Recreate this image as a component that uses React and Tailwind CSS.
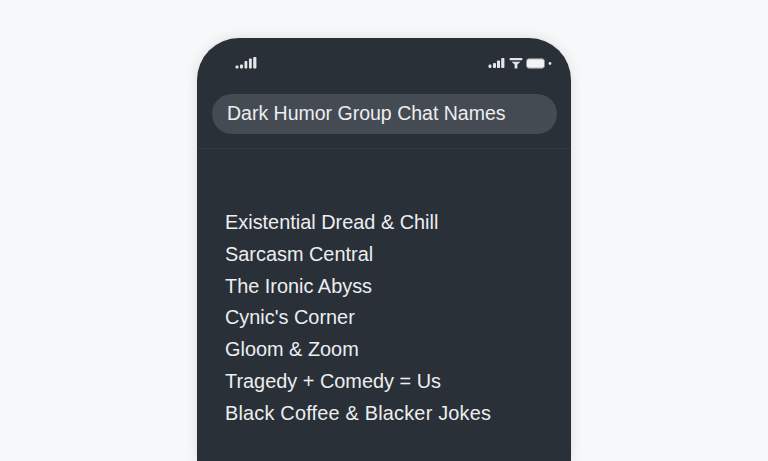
const NAMES = [
  'Existential Dread & Chill',
  'Sarcasm Central',
  'The Ironic Abyss',
  "Cynic's Corner",
  'Gloom & Zoom',
  'Tragedy + Comedy = Us',
  'Black Coffee & Blacker Jokes',
];

function SignalBars() {
  return (
    <svg width="23" height="14" viewBox="0 0 23 14" fill="#e3e5e7">
      <rect x="0.5" y="9.5" width="3" height="3" rx="1.2" />
      <rect x="5" y="8.5" width="3" height="4" rx="1" />
      <rect x="9.5" y="5" width="2.8" height="7.5" rx="0.8" />
      <rect x="14" y="2.5" width="2.8" height="10" rx="0.8" />
      <rect x="18.2" y="1" width="3.2" height="11.5" rx="0.8" />
    </svg>
  );
}

function StatusIcons() {
  return (
    <div className="mt-[1px] flex items-center">
      <svg width="17" height="14" viewBox="0 0 17 14" fill="#e3e5e7">
        <rect x="0.5" y="7.5" width="3" height="3.5" rx="1.2" />
        <rect x="5" y="6" width="3" height="5" rx="1" />
        <rect x="9" y="3.5" width="3" height="7.5" rx="0.8" />
        <rect x="13.2" y="1" width="3.2" height="10" rx="0.8" />
      </svg>
      <svg className="ml-[4px]" width="14" height="14" viewBox="0 0 14 14" fill="#e3e5e7">
        <rect x="0.5" y="1" width="13" height="2.2" rx="1" />
        <path d="M2.5 4.8h9L8.4 7.6v3.9H5.6V7.6z" />
      </svg>
      <svg className="ml-[3px]" width="27" height="14" viewBox="0 0 27 14" fill="none">
        <rect x="0.5" y="1.8" width="18" height="9.4" rx="2.4" fill="#f2f3f4" stroke="#8a8f94" strokeWidth="1" />
        <circle cx="24" cy="6.5" r="1.4" fill="#e3e5e7" />
      </svg>
    </div>
  );
}

export default function App() {
  return (
    <div className="h-[461px] overflow-hidden bg-[#f6f8fa] pt-[38px] font-['Liberation_Sans',sans-serif]">
      <div className="ml-[197px] h-[423px] w-[374px] overflow-hidden rounded-t-[42px] bg-[#2a3037] shadow-[0_0_12px_rgba(40,50,60,0.12)]">
        {/* Status bar */}
        <div className="flex h-[56px] items-start justify-between pl-[38px] pr-[18px] pt-[18px]">
          <SignalBars />
          <StatusIcons />
        </div>

        {/* Search title */}
        <div className="border-b border-[#343a41] px-[15px] pb-[14px]">
          <div className="flex h-[40px] w-[345px] items-center rounded-full bg-[#444b52] pb-[1px] pl-[15px]">
            <span className="text-[19.5px] text-[#eceef0]">Dark Humor Group Chat Names</span>
          </div>
        </div>

        {/* List */}
        <ul className="pl-[28px] pt-[58px]">
          {NAMES.map((name) => (
            <li key={name} className="text-[19.9px] leading-[31.8px] text-[#eceef0] last:tracking-[0.2px]">
              {name}
            </li>
          ))}
        </ul>
      </div>
    </div>
  );
}
